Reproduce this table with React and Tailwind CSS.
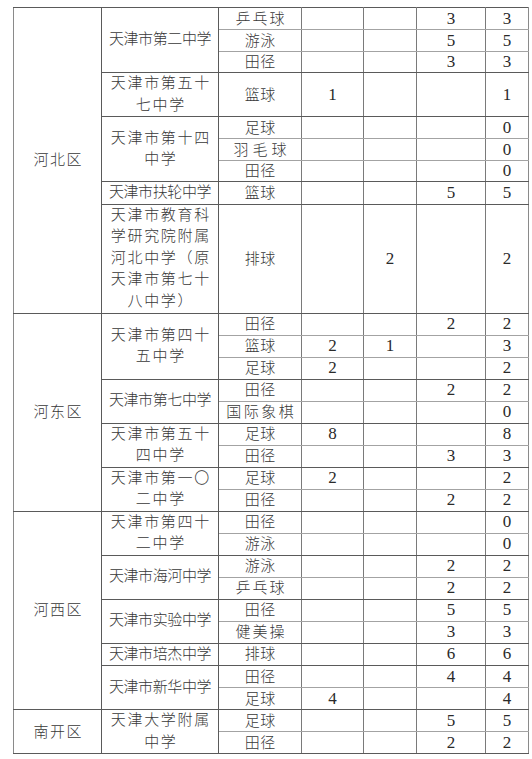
import React from "react";

const DATA = [
  {
    name: "河北区",
    schools: [
      { name: ["天津市第二中学"], rows: [["乒乓球", "", "", "3", "3"], ["游泳", "", "", "5", "5"], ["田径", "", "", "3", "3"]], hs: [22, 22, 21] },
      { name: ["天津市第五十", "七中学"], rows: [["篮球", "1", "", "", "1"]], hs: [44] },
      { name: ["天津市第十四", "中学"], rows: [["足球", "", "", "", "0"], ["羽毛球", "", "", "", "0"], ["田径", "", "", "", "0"]], hs: [22, 22, 21] },
      { name: ["天津市扶轮中学"], rows: [["篮球", "", "", "5", "5"]], hs: [22] },
      { name: ["天津市教育科", "学研究院附属", "河北中学（原", "天津市第七十", "八中学）"], rows: [["排球", "", "2", "", "2"]], hs: [109] },
    ],
  },
  {
    name: "河东区",
    schools: [
      { name: ["天津市第四十", "五中学"], rows: [["田径", "", "", "2", "2"], ["篮球", "2", "1", "", "3"], ["足球", "2", "", "", "2"]], hs: [22, 22, 22] },
      { name: ["天津市第七中学"], rows: [["田径", "", "", "2", "2"], ["国际象棋", "", "", "", "0"]], hs: [22, 22] },
      { name: ["天津市第五十", "四中学"], rows: [["足球", "8", "", "", "8"], ["田径", "", "", "3", "3"]], hs: [22, 21] },
      { name: ["天津市第一〇", "二中学"], rows: [["足球", "2", "", "", "2"], ["田径", "", "", "2", "2"]], hs: [22, 22] },
    ],
  },
  {
    name: "河西区",
    schools: [
      { name: ["天津市第四十", "二中学"], rows: [["田径", "", "", "", "0"], ["游泳", "", "", "", "0"]], hs: [22, 22] },
      { name: ["天津市海河中学"], rows: [["游泳", "", "", "2", "2"], ["乒乓球", "", "", "2", "2"]], hs: [22, 22] },
      { name: ["天津市实验中学"], rows: [["田径", "", "", "5", "5"], ["健美操", "", "", "3", "3"]], hs: [22, 22] },
      { name: ["天津市培杰中学"], rows: [["排球", "", "", "6", "6"]], hs: [22] },
      { name: ["天津市新华中学"], rows: [["田径", "", "", "4", "4"], ["足球", "4", "", "", "4"]], hs: [22, 22] },
    ],
  },
  {
    name: "南开区",
    schools: [
      { name: ["天津大学附属", "中学"], rows: [["足球", "", "", "5", "5"], ["田径", "", "", "2", "2"]], hs: [22, 22] },
    ],
  },
];

const FONT = { fontFamily: '"Liberation Serif", "Noto Sans CJK SC", serif' };

function sportTracking(s) {
  if (s === "羽毛球") return "tracking-[4px] mr-[-4px]";
  if (s === "国际象棋") return "tracking-[2.5px] mr-[-2.5px]";
  if (s.length === 3) return "tracking-[2px] mr-[-2px]";
  return "tracking-[0.5px] mr-[-0.5px]";
}

export default function App() {
  const trs = [];
  DATA.forEach((d, di) => {
    const dRows = d.schools.reduce((a, s) => a + s.rows.length, 0);
    let first = true;
    d.schools.forEach((s, si) => {
      s.rows.forEach((r, ri) => {
        const lastRowInSchool = ri === s.rows.length - 1;
        const bcls = lastRowInSchool ? "border-b-[#5a5a5a]" : "border-b-[#a3a3a3]";
        const tcls = ri === 0 ? "border-t-[#5a5a5a]" : "border-t-[#a3a3a3]";
        const cell = `border border-x-[#7a7a7a] ${tcls} ${bcls} p-0 text-center align-middle`;
        trs.push(
          <tr key={`${di}-${si}-${ri}`} style={{ height: s.hs[ri] }}>
            {first && (
              <td rowSpan={dRows} className="border border-[#5a5a5a] border-l-[#8a8a8a] p-0 text-center align-middle">
                <span className="inline-block text-[15px] font-light tracking-[1.5px] mr-[-1.5px] text-[#383838]">{d.name}</span>
              </td>
            )}
            {ri === 0 && (
              <td rowSpan={s.rows.length} className="border border-[#5a5a5a] p-0 text-center align-middle">
                <div className="flex flex-col items-center leading-[21.5px] text-[15px] font-light text-[#383838]">
                  {s.name.map((ln, k) => (
                    <span
                      key={k}
                      className={
                        s.name.length === 1
                          ? "inline-block tracking-[-0.4px] whitespace-nowrap"
                          : "inline-block tracking-[1.7px] mr-[-1.7px] whitespace-nowrap"
                      }
                    >
                      {ln}
                    </span>
                  ))}
                </div>
              </td>
            )}
            <td className={`${cell} leading-[20px]`}>
              <span className={`inline-block text-[15px] font-light text-[#383838] whitespace-nowrap ${sportTracking(r[0])}`}>{r[0]}</span>
            </td>
            {r.slice(1).map((v, k) => (
              <td key={k} className={`${cell} text-[17px] leading-[20px] text-[#2a2a2a] ${k === 3 ? "border-r-[#8a8a8a]" : ""}`}>
                {v}
              </td>
            ))}
          </tr>
        );
        first = false;
      });
    });
  });

  return (
    <div className="w-[532px] h-[759px] bg-white overflow-hidden" style={FONT}>
      <div className="pt-[7px] pl-[13px]">
        <table className="border-collapse table-fixed w-[515px]">
          <colgroup>
            <col className="w-[88px]" />
            <col className="w-[117px]" />
            <col className="w-[83px]" />
            <col className="w-[62px]" />
            <col className="w-[53px]" />
            <col className="w-[69px]" />
            <col className="w-[43px]" />
          </colgroup>
          <tbody>{trs}</tbody>
        </table>
      </div>
    </div>
  );
}
